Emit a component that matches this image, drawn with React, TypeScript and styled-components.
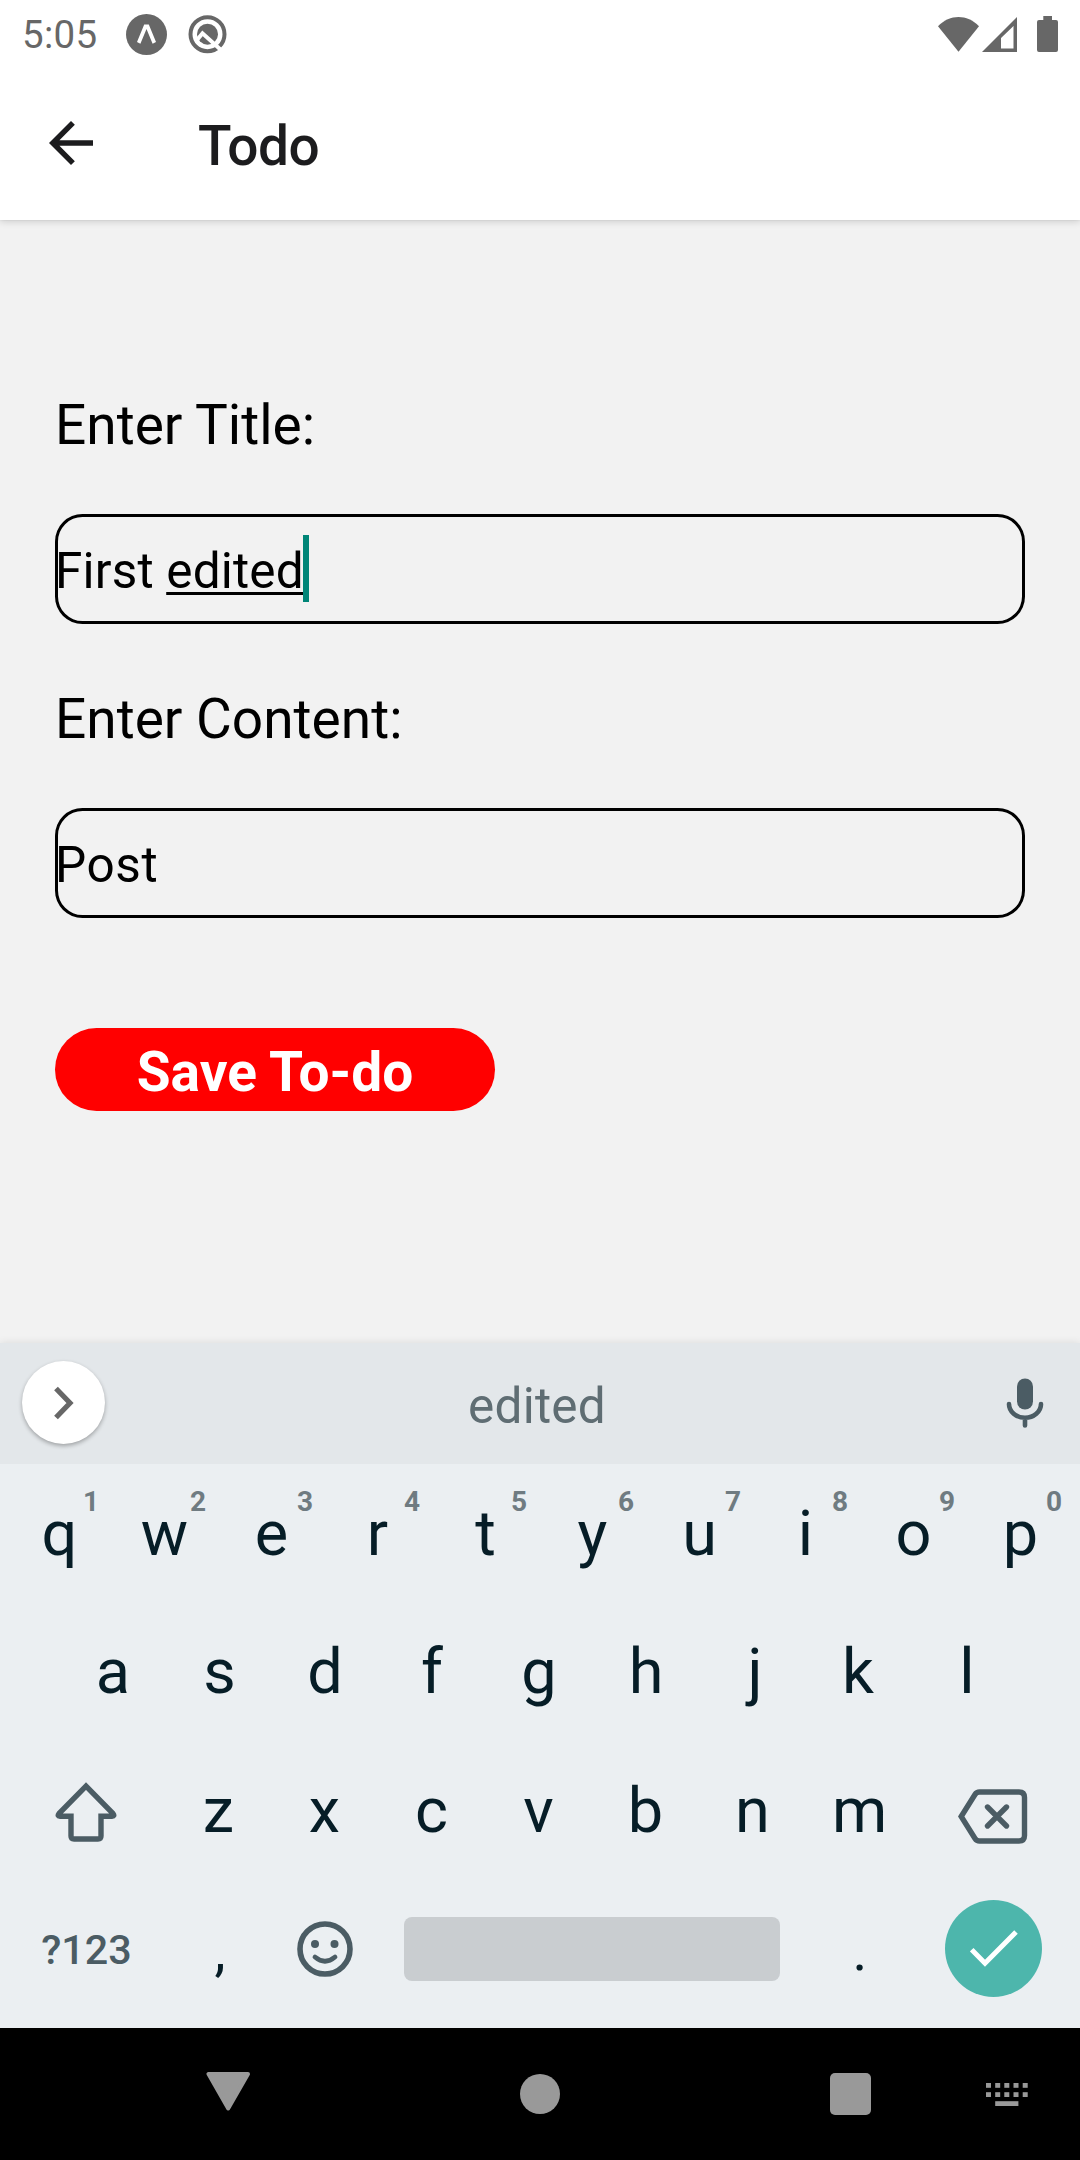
import React from "react";
import styled, { createGlobalStyle } from "styled-components";

const GlobalStyle = createGlobalStyle`
  * { box-sizing: border-box; }
  body {
    margin: 0;
    background: #f2f2f2;
    font-family: Roboto, "Noto Sans", sans-serif;
  }
  svg { display: block; flex: none; }
`;

const Screen = styled.div`
  width: 1080px;
  height: 2160px;
  display: flex;
  flex-direction: column;
  overflow: hidden;
`;

/* Top area */

const TopArea = styled.header`
  position: relative;
  z-index: 1;
  flex: none;
  height: 220px;
  background: #fff;
  box-shadow: 0 2px 7px rgba(0, 0, 0, 0.14), 0 0 2px rgba(0, 0, 0, 0.1);
`;

const StatusBar = styled.div`
  display: flex;
  align-items: center;
  height: 68px;
  padding: 0 22px;
`;

const Clock = styled.span`
  width: 104px;
  padding-top: 2px;
  font-size: 38.5px;
  line-height: 46px;
  letter-spacing: 0.3px;
  color: #676767;
`;

const StatusIcons = styled.div<{ $gap: number; $end?: boolean }>`
  display: flex;
  align-items: center;
  gap: ${(p) => p.$gap}px;
  margin-left: ${(p) => (p.$end ? "auto" : "0")};
`;

const AppBar = styled.div`
  display: flex;
  align-items: center;
  height: 152px;
  padding: 0 38px 2px;
`;

const AppTitle = styled.h1`
  margin: 0 0 0 94px;
  padding-top: 5px;
  font-size: 55px;
  line-height: 64px;
  letter-spacing: -0.5px;
  font-weight: 500;
  color: #1c1c1e;
`;

/* Form */

const Form = styled.main`
  flex: 1;
  display: flex;
  flex-direction: column;
  padding: 173px 55px 0;
  background: #f2f2f2;
`;

const Label = styled.label`
  font-size: 55px;
  line-height: 64px;
  color: #000;
`;

const Field = styled.div<{ $after: number; $tracking: number }>`
  display: flex;
  align-items: center;
  height: 110px;
  margin: 57px 0 ${(p) => p.$after}px;
  padding-top: 4px;
  border-radius: 27.5px;
  box-shadow: inset 0 0 0 3px #000;
  font-size: 49.5px;
  line-height: 58px;
  letter-spacing: ${(p) => p.$tracking}px;
  white-space: pre;
  color: #000;
`;

const Composing = styled.span`
  text-decoration: underline;
  text-decoration-thickness: 2.5px;
  text-underline-offset: 4px;
  text-decoration-skip-ink: none;
`;

const Caret = styled.span`
  width: 6px;
  height: 67px;
  margin: 0 0 5px -1px;
  background: #008577;
`;

const SaveButton = styled.button`
  width: 440px;
  height: 83px;
  padding: 5px 0 0;
  border: 0;
  border-radius: 41.5px;
  background: #f00;
  color: #fff;
  font: bold 55px/64px Roboto, sans-serif;
`;

/* Keyboard */

const Keyboard = styled.section`
  flex: none;
  height: 685px;
  background: #ebeff2;
  box-shadow: 0 0 8px rgba(0, 0, 0, 0.1);
`;

const SuggestionStrip = styled.div`
  display: flex;
  align-items: center;
  justify-content: space-between;
  height: 121px;
  padding: 0 36px 2px 22px;
  background: #e3e7ea;
`;

const ExpandButton = styled.div`
  display: flex;
  align-items: center;
  justify-content: center;
  width: 83px;
  height: 83px;
  border-radius: 50%;
  background: #fff;
  box-shadow: 0 2px 4px rgba(0, 0, 0, 0.3);
`;

const Suggestion = styled.span`
  padding: 6px 37px 0 0;
  font-size: 49.5px;
  line-height: 58px;
  letter-spacing: 0.25px;
  color: #5f6d73;
`;

const Keys = styled.div`
  padding: 0 6px 0 4px;
`;

const KeyRow = styled.div<{ $height: number }>`
  display: flex;
  justify-content: center;
  height: ${(p) => p.$height}px;
`;

const Key = styled.div<{ $width?: number }>`
  position: relative;
  display: flex;
  align-items: center;
  justify-content: center;
  width: ${(p) => p.$width ?? 107}px;
  font-size: 63px;
  line-height: 74px;
  color: #061d27;
`;

const Glyph = styled.span<{ $left?: number; $right?: number }>`
  padding-left: ${(p) => p.$left ?? 0}px;
  padding-right: ${(p) => p.$right ?? 0}px;
`;

const Hint = styled.sup`
  position: absolute;
  top: 22px;
  left: 78px;
  width: 18px;
  text-align: center;
  font-size: 28px;
  line-height: 32px;
  font-weight: 700;
  color: #6f7b81;
`;

const IconSlot = styled.div<{ $top?: number; $bottom?: number; $left?: number; $right?: number }>`
  padding: ${(p) => `${p.$top ?? 0}px ${p.$right ?? 0}px ${p.$bottom ?? 0}px ${p.$left ?? 0}px`};
`;

const SymbolsLabel = styled.span`
  padding: 1px 0 0 5px;
  font-size: 41.25px;
  line-height: 48px;
  font-weight: 500;
  color: #4b5c64;
`;

const Punctuation = styled.span<{ $left?: number }>`
  padding: 3px 0 0 ${(p) => p.$left ?? 0}px;
  font-size: 56px;
`;

const SpaceBar = styled.div`
  width: 376px;
  height: 64px;
  border-radius: 8px;
  background: #c9cdd0;
`;

const EnterButton = styled.div`
  display: flex;
  align-items: center;
  justify-content: center;
  width: 97px;
  height: 97px;
  margin-bottom: 1px;
  border-radius: 50%;
  background: #4db6ac;
`;

/* System navigation */

const NavBar = styled.nav`
  flex: none;
  display: flex;
  align-items: center;
  height: 132px;
  padding: 0 52px 0 206px;
  background: #000;
`;

const HomeDot = styled.div`
  width: 40px;
  height: 40px;
  margin: 0 270px 0 269px;
  border-radius: 50%;
  background: #999;
`;

const RecentsSquare = styled.div`
  width: 41px;
  height: 42px;
  margin-right: auto;
  border-radius: 5px;
  background: #999;
`;

const ExpoIcon = () => (
  <svg width="41" height="41" viewBox="0 0 41 41">
    <circle cx="20.5" cy="20.5" r="20.5" fill="#676767" />
    <path d="M11 28 18.2 10.5h4.6L30 28l-3.4 1.8L20.5 15 14.4 29.8Z" fill="#fff" />
  </svg>
);

const BetaIcon = () => (
  <svg width="39" height="39" viewBox="0 0 39 39">
    <circle cx="19.5" cy="19.2" r="17" fill="none" stroke="#676767" strokeWidth="4" />
    <circle cx="19.5" cy="19.2" r="10.5" fill="#676767" />
    <path d="M9 25 14.5 18.3 33 35" fill="none" stroke="#fff" strokeWidth="4" />
  </svg>
);

const WifiIcon = () => (
  <svg width="41" height="35" viewBox="0 0 41 35">
    <path d="M0 9.3C12-3 29-3 41 9.3L20.5 34.7Z" fill="#676767" />
  </svg>
);

const SignalIcon = () => (
  <svg width="35" height="35" viewBox="0 0 35 35">
    <path d="M0 35 35 0V35ZM19 31.5H31.5V9L19 21Z" fill="#676767" fillRule="evenodd" />
  </svg>
);

const BatteryIcon = () => (
  <svg width="21" height="36" viewBox="0 0 21 36">
    <path d="M6.3 0h8.7v4H19a2 2 0 0 1 2 2V34a2 2 0 0 1-2 2H2a2 2 0 0 1-2-2V6a2 2 0 0 1 2-2H6.3Z" fill="#676767" />
  </svg>
);

const BackIcon = () => (
  <svg width="66" height="66" viewBox="0 0 24 24">
    <path d="M20 11H7.8l5.6-5.6L12 4l-8 8 8 8 1.4-1.4L7.8 13H20Z" fill="#1c1c1e" />
  </svg>
);

const ChevronIcon = () => (
  <svg width="24" height="34" viewBox="0 0 24 34">
    <path d="M4 2.5 18 17 4 31.5" fill="none" stroke="#676767" strokeWidth="5.2" />
  </svg>
);

const MicIcon = () => (
  <svg width="38" height="50" viewBox="0 0 38 50">
    <rect x="11" y="0.5" width="16" height="31" rx="8" fill="#4b5c64" />
    <path d="M3 26a16 13.8 0 0 0 32 0M19 40v7.5" fill="none" stroke="#4b5c64" strokeWidth="4.6" strokeLinecap="round" />
  </svg>
);

const ShiftIcon = () => (
  <svg width="62" height="60" viewBox="0 0 62 60">
    <path
      d="M31 4.2 4 31.5Q2 34.2 5 34.2H16V54Q16 57 19 57H43Q46 57 46 54V34.2H57Q60 34.2 58 31.5Z"
      fill="none"
      stroke="#4b5c64"
      strokeWidth="5.4"
    />
  </svg>
);

const BackspaceIcon = () => (
  <svg width="70" height="55" viewBox="0 0 70 55">
    <path
      d="M3.2 27.5 17 5.5Q18.6 3 21.5 3H61Q66.5 3 66.5 8.5V46.5Q66.5 52 61 52H21.5Q18.6 52 17 49.5Z"
      fill="none"
      stroke="#4b5c64"
      strokeWidth="5.4"
    />
    <path d="M29.5 18 48.5 37M48.5 18 29.5 37" stroke="#4b5c64" strokeWidth="5.4" strokeLinecap="round" />
  </svg>
);

const SmileyIcon = () => (
  <svg width="56" height="56" viewBox="0 0 56 56">
    <circle cx="28" cy="28" r="25" fill="none" stroke="#4b5c64" strokeWidth="5.6" />
    <circle cx="18" cy="23" r="4" fill="#4b5c64" />
    <circle cx="37.5" cy="23" r="4" fill="#4b5c64" />
    <path d="M18 36Q28 44.5 38 36" fill="none" stroke="#4b5c64" strokeWidth="4.8" strokeLinecap="round" />
  </svg>
);

const CheckIcon = () => (
  <svg width="48" height="37" viewBox="0 0 48 37">
    <path d="M1.7 19.7 15 33.3 46 2" fill="none" stroke="#fff" strokeWidth="5" />
  </svg>
);

const NavBackIcon = () => (
  <svg width="45" height="46" viewBox="0 0 45 46">
    <path d="M2.5 3H42L22.2 37.5Z" fill="#999" stroke="#999" strokeWidth="4" strokeLinejoin="round" />
  </svg>
);

const NavKeyboardIcon = () => (
  <svg width="42" height="23" viewBox="0 0 42 23">
    {[0, 9.2].map((y) =>
      [0, 9.2, 18.3, 27.5, 36.7].map((x) => <rect key={`${x}-${y}`} x={x} y={y} width="5" height="4.8" fill="#999" />)
    )}
    <rect x="9.2" y="18.2" width="23.2" height="4.8" fill="#999" />
  </svg>
);

const topRow = "qwertyuiop".split("");
const homeRow = "asdfghjkl".split("");
const bottomRow = "zxcvbnm".split("");

const bearings: Record<string, { left?: number; right?: number }> = {
  q: { left: 4 },
  r: { right: 2 },
  i: { right: 2 },
  a: { left: 4 },
  s: { left: 3 },
  j: { left: 4 },
  k: { right: 4 },
  z: { left: 2 },
};

const Letter = ({ children }: { children: string }) => (
  <Glyph $left={bearings[children]?.left} $right={bearings[children]?.right}>
    {children}
  </Glyph>
);

export default function App() {
  return (
    <>
      <GlobalStyle />
      <Screen>
        <TopArea>
          <StatusBar>
            <Clock>5:05</Clock>
            <StatusIcons $gap={21}>
              <ExpoIcon />
              <BetaIcon />
            </StatusIcons>
            <StatusIcons $gap={20} $end>
              <StatusIcons $gap={3}>
                <WifiIcon />
                <SignalIcon />
              </StatusIcons>
              <BatteryIcon />
            </StatusIcons>
          </StatusBar>
          <AppBar>
            <BackIcon />
            <AppTitle>Todo</AppTitle>
          </AppBar>
        </TopArea>

        <Form>
          <Label>Enter Title:</Label>
          <Field $after={63} $tracking={0.17}>
            First <Composing>edited</Composing>
            <Caret />
          </Field>
          <Label>Enter Content:</Label>
          <Field $after={110} $tracking={0.6}>
            Post
          </Field>
          <SaveButton>Save To-do</SaveButton>
        </Form>

        <Keyboard>
          <SuggestionStrip>
            <ExpandButton>
              <ChevronIcon />
            </ExpandButton>
            <Suggestion>edited</Suggestion>
            <MicIcon />
          </SuggestionStrip>
          <Keys>
            <KeyRow $height={139}>
              {topRow.map((letter, i) => (
                <Key key={letter}>
                  <Letter>{letter}</Letter>
                  <Hint>{(i + 1) % 10}</Hint>
                </Key>
              ))}
            </KeyRow>
            <KeyRow $height={138}>
              {homeRow.map((letter) => (
                <Key key={letter}>
                  <Letter>{letter}</Letter>
                </Key>
              ))}
            </KeyRow>
            <KeyRow $height={139}>
              <Key $width={160}>
                <IconSlot $top={3} $left={3}>
                  <ShiftIcon />
                </IconSlot>
              </Key>
              {bottomRow.map((letter) => (
                <Key key={letter}>
                  <Letter>{letter}</Letter>
                </Key>
              ))}
              <Key $width={161}>
                <IconSlot $top={11} $right={2}>
                  <BackspaceIcon />
                </IconSlot>
              </Key>
            </KeyRow>
            <KeyRow $height={138}>
              <Key $width={160}>
                <SymbolsLabel>?123</SymbolsLabel>
              </Key>
              <Key>
                <Punctuation $left={5}>,</Punctuation>
              </Key>
              <Key>
                <SmileyIcon />
              </Key>
              <Key $width={428}>
                <SpaceBar />
              </Key>
              <Key>
                <Punctuation $left={1}>.</Punctuation>
              </Key>
              <Key $width={161}>
                <EnterButton>
                  <CheckIcon />
                </EnterButton>
              </Key>
            </KeyRow>
          </Keys>
        </Keyboard>

        <NavBar>
          <NavBackIcon />
          <HomeDot />
          <RecentsSquare />
          <NavKeyboardIcon />
        </NavBar>
      </Screen>
    </>
  );
}
